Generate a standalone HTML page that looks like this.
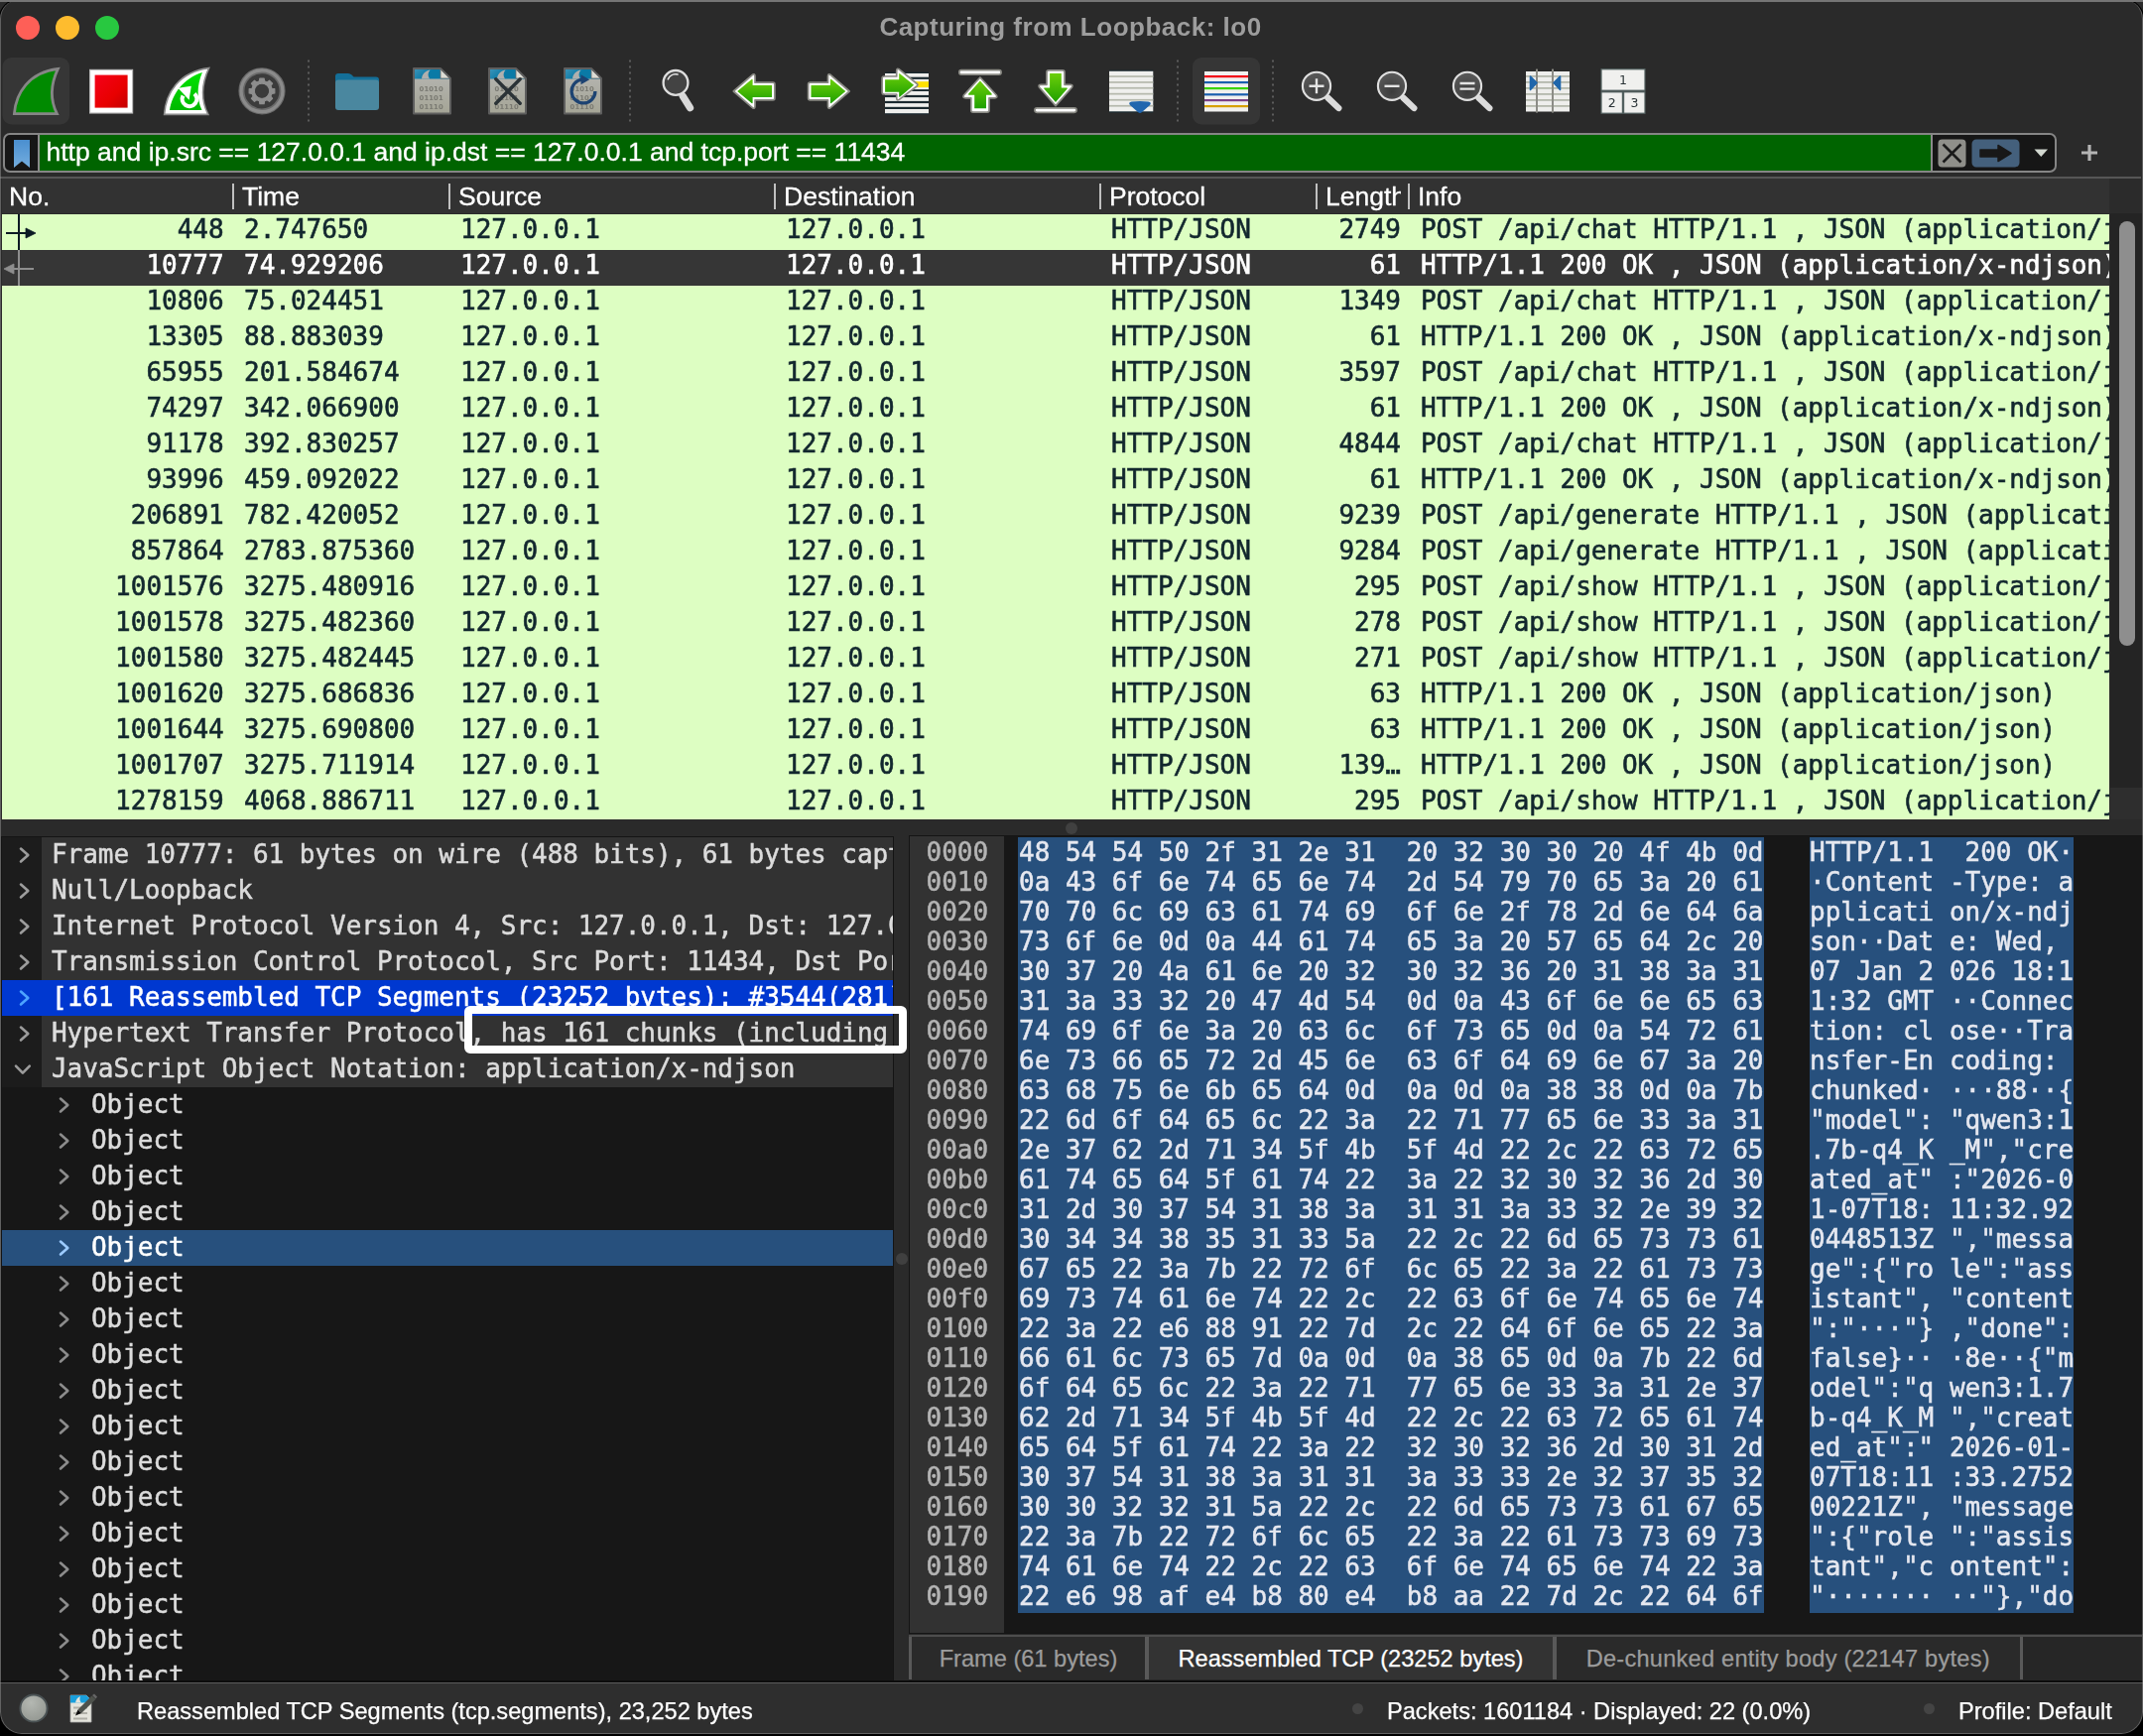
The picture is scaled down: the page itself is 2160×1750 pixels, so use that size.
<!DOCTYPE html>
<html lang="en"><head><meta charset="utf-8"><title>Capturing from Loopback: lo0</title>
<style>
html,body{margin:0;padding:0;background:#000;}
body{width:2160px;height:1750px;overflow:hidden;position:relative;font-family:"Liberation Sans",sans-serif;}
#win{will-change:opacity;position:absolute;left:0;top:0;width:2159.5px;height:1748px;background:#2a2a2a;border-radius:0 0 22px 22px;overflow:hidden;}
#win>*{position:absolute;}
/* title bar */
#titlebar{left:0;top:0;width:2158px;height:56px;}
.tl{position:absolute;top:16px;width:24px;height:24px;border-radius:50%;}
#title{position:absolute;left:0;top:0;width:2158px;text-align:center;line-height:54px;font-weight:bold;font-size:26px;color:#9d9d9d;letter-spacing:0.5px;}
/* toolbar */
#toolbar{left:0;top:56px;width:2158px;height:72px;}
#toolbar svg{position:absolute;left:0;top:0;}
/* filter */
#filter{left:3px;top:134px;width:2070px;height:40.3px;border:2px solid #858585;border-radius:7px;box-sizing:border-box;background:#161616;overflow:hidden;}
#filter>*{position:absolute;}
#fgreen{left:32.5px;top:0;width:1910.5px;height:36.3px;background:#006400;border-left:2px solid #8a8a8a;border-right:2px solid #8a8a8a;box-sizing:border-box;}
#ftext{left:41.5px;top:-1px;line-height:37px;font-size:26.5px;-webkit-text-stroke:0.3px;color:#fff;white-space:nowrap;}
#fplus{left:2097px;top:145px;width:18px;height:18px;}
#fline{left:0;top:178.4px;width:2158px;height:1.8px;background:#565656;}
/* packet list */
#plist{left:2px;top:180px;width:2157px;height:646px;background:#2b2b2b;overflow:hidden;}
#plist>*{position:absolute;}
#phead{left:-1px;top:0;width:2125px;height:35px;background:#323232;color:#fff;font-size:26px;-webkit-text-stroke:0.3px;}
.hc{position:absolute;white-space:nowrap;top:0;height:35px;line-height:36px;font-size:26.5px;}
.hs{position:absolute;top:5px;width:1.6px;height:25.5px;background:#c0c0c0;}
.c-len{width:76px;overflow:hidden;}
.prow{left:0;width:2124px;height:36px;background:#ddfec2;color:#12272e;font-family:"DejaVu Sans Mono","Liberation Mono",monospace;font-size:26px;line-height:32px;white-space:nowrap;overflow:hidden;margin-top:-180px;-webkit-text-stroke:0.6px;}
.prow.sel{background:#363636;color:#fff;}
.pc{position:absolute;top:-0.6px;}
.p-no{left:0;width:223.7px;text-align:right;}
.p-time{left:244px;}
.p-src{left:462px;}
.p-dst{left:790px;}
.p-proto{left:1118px;}
.p-len{left:1302px;width:108px;text-align:right;}
.p-info{left:1430px;letter-spacing:-0.04px;}
/* tree */
#tree{left:2px;top:844px;width:898px;height:851px;background:#171717;overflow:hidden;box-shadow:0 0 0 1px #141414;font-family:"DejaVu Sans Mono","Liberation Mono",monospace;font-size:26px;color:#dcdcdc;}
.trow{position:absolute;left:0;width:898px;height:36px;line-height:33px;white-space:nowrap;overflow:hidden;}
.trow.top{background:linear-gradient(90deg,#1c1c1c 0,#1c1c1c 40px,#323232 40px);}
.trow.tsel{background:#0038d0;color:#fff;}
.trow.csel{background:#27507d;color:#fff;}
.tt{position:absolute;left:50px;top:1px;-webkit-text-stroke:0.5px;letter-spacing:-0.04px;}
.child .tt{left:90px;}
.chev{position:absolute;left:14px;top:8px;width:20px;height:20px;fill:none;stroke:#9c9c9c;stroke-width:2.6;stroke-linecap:round;stroke-linejoin:round;overflow:visible;}
.child .chev{left:54.3px;stroke:#8c8c8c;}
.csel .chev{stroke:#9ccbff;}
.tsel .chev{stroke:#4da3ff;}
#annot{left:468px;top:1014px;width:429.6px;height:32.4px;border:8px solid #fff;border-radius:6px;box-sizing:content-box;}
/* hex */
#hex{left:917px;top:843px;width:1241.5px;height:803px;background:#171717;overflow:hidden;box-shadow:0 0 0 1px #141414;font-family:"DejaVu Sans Mono","Liberation Mono",monospace;font-size:26px;color:#e6e8f0;}
#hex>*{position:absolute;}
#hexoffbg{left:0;top:0;width:95px;height:803px;background:#323232;}
#hexsel1{left:109px;top:0.8px;width:752px;height:782px;background:#27507d;}
#hexsel2{left:907px;top:0.8px;width:266px;height:782px;background:#27507d;}
.hrow{left:0;width:1242px;height:30px;line-height:30px;white-space:pre;margin-top:1.2px;-webkit-text-stroke:0.5px;}
.hrow span{position:absolute;top:0;}
.ho{left:16.5px;color:#b4b4b4;}
.hb{left:110px;letter-spacing:-0.02px;}
.ha{left:907px;}
/* tabs */
#tabs{-webkit-text-stroke:0.25px;left:916px;top:1647.5px;width:1242.5px;height:46.2px;font-size:23.6px;color:#9c9c9c;border-top:2.5px solid #4d4d4d;box-sizing:border-box;background:#262626;}
.tab{position:absolute;top:0;height:43.7px;line-height:45.5px;text-align:center;background:#2a2a2a;box-sizing:border-box;white-space:nowrap;}
.tab.act{background:#333;color:#fff;}
.tsep{position:absolute;top:0;height:43.7px;background:#595959;}
#tabline{left:0;top:1693.7px;width:2159.5px;height:2.5px;background:#0c0c0c;}
/* status */
#status{-webkit-text-stroke:0.25px;left:0;top:1696px;width:2159.5px;height:52px;background:#2e2e2e;border-top:1.4px solid #5c5c5c;box-sizing:border-box;color:#fff;font-size:23.6px;}
#status>*{position:absolute;}
.grip{width:12px;height:12px;border-radius:50%;background:#404040;}
#frame{left:0;top:0;width:2159.5px;height:1748px;box-sizing:border-box;border:1.6px solid rgba(150,150,150,0.5);border-top:0;border-radius:19px 19px 22px 22px;pointer-events:none;box-shadow:0 0 0 1.3px #000;}
#topline{left:0;top:0;width:2160px;height:2px;background:#757575;}
</style></head>
<body>
<div id="win">
<div id="titlebar"><span class="tl" style="left:16px;background:#fe5f57"></span><span class="tl" style="left:56px;background:#febc2e"></span><span class="tl" style="left:96px;background:#28c840"></span><div id="title">Capturing from Loopback: lo0</div></div>
<div id="toolbar"><svg width="2158" height="72" viewBox="0 56 2158 72">
<defs>
<linearGradient id="gA" x1="0" y1="0" x2="0" y2="1"><stop offset="0" stop-color="#6ccf0a"/><stop offset="1" stop-color="#1fa000"/></linearGradient>
<linearGradient id="gR" x1="0" y1="0" x2="1" y2="1"><stop offset="0" stop-color="#f5001a"/><stop offset="0.6" stop-color="#e80000"/><stop offset="1" stop-color="#c40000"/></linearGradient>
<linearGradient id="gF" x1="0" y1="0" x2="0" y2="1"><stop offset="0" stop-color="#00e400"/><stop offset="1" stop-color="#00b800"/></linearGradient>
<radialGradient id="gL" cx="0.5" cy="0.700" r="0.650"><stop offset="0" stop-color="#3c3c3c"/><stop offset="1" stop-color="#595959"/></radialGradient>
<linearGradient id="gB" x1="0" y1="0" x2="1" y2="0.3"><stop offset="0" stop-color="#3a93b8"/><stop offset="0.500" stop-color="#0a7aa6"/><stop offset="1" stop-color="#0a7aa6"/></linearGradient>
<g id="dots" fill="#5c5c5c" transform="translate(0 -0.500)"><rect y="61" width="2" height="2"/><rect y="67" width="2" height="2"/><rect y="73" width="2" height="2"/><rect y="79" width="2" height="2"/><rect y="85" width="2" height="2"/><rect y="91" width="2" height="2"/><rect y="97" width="2" height="2"/><rect y="103" width="2" height="2"/><rect y="109" width="2" height="2"/><rect y="115" width="2" height="2"/><rect y="121" width="2" height="2"/></g>
<linearGradient id="gFb" x1="0" y1="0" x2="0" y2="1"><stop offset="0" stop-color="#b6b6b3"/><stop offset="1" stop-color="#a5a596"/></linearGradient>
<g id="file"><path d="M1 1 H28 L38 11 V46.600 H1 Z" fill="url(#gFb)" stroke="#5e5e5e" stroke-width="2" stroke-linejoin="round"/><path d="M2 2 H27.600 L37 11.400 H2 Z" fill="url(#gB)"/><path d="M9 11.400 C9.500 7 12 4 17.500 2.600 C15 5.500 15 8.600 17 11.400 Z" fill="#b0b0ae"/><path d="M28 2 V11 H37 Z" fill="#dcdcd4" stroke="#6a6a6a" stroke-width="0.800"/></g>
<g id="bits" font-family="'DejaVu Sans','Liberation Sans',sans-serif" font-weight="bold" font-size="6.800" fill="#7a7a72" letter-spacing="0.100"><text x="6.600" y="23.800">01010</text><text x="6.600" y="32.700">01101</text><text x="6.600" y="41.600">01110</text></g>
<g id="lens"><path d="M11.400 11.800 L22.300 22.200" stroke="#dbdbdb" stroke-width="6.300" stroke-linecap="round"/><circle cx="0" cy="0" r="14.100" fill="url(#gL)" stroke="#e0e0e0" stroke-width="2.100"/></g>
<linearGradient id="gA2" x1="0" y1="1" x2="0" y2="0"><stop offset="0" stop-color="#6ccf0a"/><stop offset="1" stop-color="#1fa000"/></linearGradient>
</defs>
<!-- active bg -->
<rect x="2.5" y="58" width="67.5" height="67.5" rx="9" fill="#363636"/>
<rect x="1202" y="58" width="68" height="67.5" rx="9" fill="#363636"/>
<!-- separators -->
<use href="#dots" x="310"/><use href="#dots" x="634"/><use href="#dots" x="1186"/><use href="#dots" x="1282"/>
<!-- start capture fin -->
<path d="M14.400 114.600 C16 94 29 73 58.400 69.400 C51.500 84 49.500 99 57.400 114.600 Z" fill="#008a00" stroke="#868686" stroke-width="2.800" stroke-linejoin="miter"/>
<!-- stop -->
<rect x="90.600" y="70.400" width="43" height="43.600" fill="#fff" stroke="#b9b9b9" stroke-width="1.200"/>
<rect x="95.600" y="75.600" width="33" height="33" fill="url(#gR)"/>
<!-- restart fin -->
<path d="M165.600 115.400 C167 94 180 72.500 210.600 68.600 C203.500 84 201.500 99 209.800 115.400 Z" fill="#fff" stroke="#8c8c8c" stroke-width="1.600" stroke-linejoin="miter"/>
<path d="M171 111 C173.500 95 184 79.500 203.900 73 C198.500 86 198 99 203.500 111 Z" fill="url(#gF)"/>
<path d="M196 94.500 A7.300 7.300 0 1 1 184.500 96.500" fill="none" stroke="#fff" stroke-width="4.200"/>
<path d="M179.400 88.700 L192.800 86.800 L190.600 100.800 Z" fill="#fff"/>
<!-- options gear -->
<circle cx="264" cy="91.800" r="20.600" fill="#3b3b3b" stroke="#6a6a6a" stroke-width="6"/>
<circle cx="264" cy="91.800" r="20.900" fill="none" stroke="#8b8b8b" stroke-width="3.200"/>
<path d="M261.42 81.83 L261.85 78.98 L266.15 78.98 L266.58 81.83 L269.23 82.93 L271.55 81.22 L274.58 84.25 L272.87 86.57 L273.97 89.22 L276.82 89.65 L276.82 93.95 L273.97 94.38 L272.87 97.03 L274.58 99.35 L271.55 102.38 L269.23 100.67 L266.58 101.77 L266.15 104.62 L261.85 104.62 L261.42 101.77 L258.77 100.67 L256.45 102.38 L253.42 99.35 L255.13 97.03 L254.03 94.38 L251.18 93.95 L251.18 89.65 L254.03 89.22 L255.13 86.57 L253.42 84.25 L256.45 81.22 L258.77 82.93 Z M271.40 91.80 A7.4 7.4 0 1 0 256.60 91.80 A7.4 7.4 0 1 0 271.40 91.80 Z" fill="#8e8e8e" stroke="#8e8e8e" stroke-width="1.200" stroke-linejoin="round" fill-rule="evenodd"/>
<circle cx="264" cy="91.800" r="7" fill="#3b3b3b"/>
<!-- folder -->
<path d="M338 77 Q338 74 341 74 H351 Q353 74 354.500 75.500 L356.500 77.500 H379 Q382 77.500 382 80.500 V84 H338 Z" fill="#146f98"/>
<rect x="338" y="80.500" width="44" height="30.500" rx="3" fill="#4a879f"/>
<!-- files -->
<use href="#file" x="416" y="68"/><use href="#bits" x="416" y="68"/>
<use href="#file" x="492" y="68"/><use href="#bits" x="492" y="68"/>
<path d="M499.800 79.800 L524.200 104.200 M524.200 79.800 L499.800 104.200" stroke="#2b3337" stroke-width="3.400" stroke-linecap="round"/>
<use href="#file" x="568" y="68"/><use href="#bits" x="568" y="68"/>
<path d="M587 80.200 A11.900 11.900 0 1 0 599.900 92" fill="none" stroke="#1d4372" stroke-width="3.300"/>
<path d="M585.500 75.300 L594.200 80.200 L585.500 85.200 Z" fill="#1d4372"/>
<!-- find -->
<path d="M688.200 96.800 L695.500 108.600" stroke="#d9d9d9" stroke-width="7.300" stroke-linecap="round"/>
<circle cx="681" cy="83.400" r="12.400" fill="#434343" stroke="#dedede" stroke-width="2.300"/>
<path d="M673.300 79.800 A8.600 8.600 0 0 1 683 75" fill="none" stroke="#e6e6e6" stroke-width="1.600" stroke-linecap="round"/>
<!-- back arrow -->
<g id="arrL"><path d="M739.300 92 L758.500 75.300 Q760.900 73.800 761 77 V83.200 H779 Q780.900 83.200 780.900 85 V99 Q780.900 100.800 779 100.800 H761 V107 Q760.900 110.200 758.500 108.700 Z" fill="#fff" stroke="#8a8a84" stroke-width="1.700" stroke-linejoin="round"/>
<path d="M743.200 92 L757.600 80 Q758.600 79.500 758.600 80.600 V86.100 H778 V97.900 H758.600 V103.400 Q758.600 104.500 757.600 104 Z" fill="url(#gA)"/></g>
<!-- fwd arrow -->
<use href="#arrL" transform="translate(1595.500 0) scale(-1 1)"/>
<!-- goto -->
<rect x="892" y="72.600" width="44" height="42.800" fill="#1b2a30"/>
<g fill="#efefed"><rect x="892" y="74" width="44" height="3.700"/><rect x="892" y="79.900" width="44" height="10.200"/><rect x="892" y="92" width="44" height="3.900"/><rect x="892" y="98.100" width="44" height="3.800"/><rect x="892" y="104.100" width="44" height="3.700"/><rect x="892" y="110" width="44" height="4.200"/></g>
<rect x="918" y="82.200" width="18" height="5.900" fill="#ffe100"/>
<path d="M889.100 79 Q889.100 77 891 77 H903.700 V71.500 Q903.800 68.300 906.300 69.800 L924.300 84.500 Q925.500 85.600 924.300 86.700 L906.300 100.400 Q903.800 102 903.700 98.700 V95 H891 Q889.100 95 889.100 93 Z" fill="#fff" stroke="#8a8a84" stroke-width="1.700" stroke-linejoin="round"/>
<path d="M892.100 80.200 H906.200 V74.800 Q906.200 73.600 907.200 74.400 L921.100 85.700 L907.200 97.600 Q906.200 98.300 906.200 97.200 V92.700 H892.100 Z" fill="url(#gA)"/>
<!-- first -->
<rect x="966.800" y="70.700" width="42.300" height="4.400" rx="2.200" fill="#fff" stroke="#8a8a84" stroke-width="1.700"/>
<path d="M987.900 78 L1004.400 96 Q1005.900 98.800 1002.500 98.800 H997 V111.200 Q997 113.100 995 113.100 H980.800 Q978.800 113.100 978.800 111.200 V98.800 H973.300 Q969.900 98.800 971.400 96 Z" fill="#fff" stroke="#8a8a84" stroke-width="1.700" stroke-linejoin="round"/>
<path d="M987.900 81.600 L999.600 94.600 Q1000.200 95.800 999 95.800 H994 V109.300 H982.200 V95.800 H976.800 Q975.600 95.800 976.200 94.600 Z" fill="url(#gA)"/>
<!-- last -->
<rect x="1042.900" y="108.900" width="42.200" height="4.400" rx="2.200" fill="#fff" stroke="#8a8a84" stroke-width="1.700"/>
<path d="M1064 106.600 L1080.500 88 Q1082 85.300 1078.600 85.300 H1073 V72.800 Q1073 70.900 1071 70.900 H1057 Q1055 70.900 1055 72.800 V85.300 H1049.400 Q1046 85.300 1047.500 88 Z" fill="#fff" stroke="#8a8a84" stroke-width="1.700" stroke-linejoin="round"/>
<path d="M1064 103.100 L1075.700 89.600 Q1076.300 88.400 1075.100 88.400 H1069.800 V74 H1058.100 V88.400 H1052.900 Q1051.700 88.400 1052.300 89.600 Z" fill="url(#gA)"/>
<!-- autoscroll -->
<rect x="1118" y="70.600" width="44.300" height="43" fill="#1b2a30"/>
<rect x="1118" y="71.800" width="44.300" height="40.500" fill="#efefed"/>
<g fill="#b5b8ac"><rect x="1118" y="76.200" width="44.300" height="1.700"/><rect x="1118" y="82.100" width="44.300" height="1.700"/><rect x="1118" y="87.900" width="44.300" height="1.700"/><rect x="1118" y="93.800" width="44.300" height="1.700"/><rect x="1118" y="99.900" width="44.300" height="1.700"/><rect x="1118" y="105.900" width="44.300" height="1.700"/></g>
<path d="M1140.500 102.600 Q1149 101.600 1157.500 102.600 Q1161.200 103.300 1159 106 L1151 113 Q1149 114.800 1147 113 L1139 106 Q1136.800 103.300 1140.500 102.600 Z" fill="#2166ae"/>
<!-- colorize -->
<rect x="1214" y="72" width="44" height="40.500" fill="#f0f0ee"/>
<g><rect x="1214" y="76" width="44" height="2.200" fill="#f10014"/><rect x="1214" y="82" width="44" height="2.200" fill="#1a5fae"/><rect x="1214" y="88" width="44" height="2.200" fill="#38d400"/><rect x="1214" y="94.200" width="44" height="2.200" fill="#1a5fae"/><rect x="1214" y="100" width="44" height="2.200" fill="#7a3f86"/><rect x="1214" y="106" width="44" height="2.200" fill="#d6a000"/></g>
<!-- zoom in / out / 1:1 -->
<use href="#lens" x="1327" y="86.800"/><path d="M1319.500 86.800 H1334.500 M1327 79.300 V94.300" stroke="#e4e4e4" stroke-width="2.400"/>
<use href="#lens" x="1403" y="86.800"/><path d="M1395.500 86.800 H1410.500" stroke="#e4e4e4" stroke-width="2.400"/>
<use href="#lens" x="1479" y="86.800"/><path d="M1471.500 84 H1486.500 M1471.500 89.600 H1486.500" stroke="#e4e4e4" stroke-width="2.400"/>
<!-- resize columns -->
<rect x="1538" y="72" width="44" height="40.500" fill="#eeeeec"/>
<g fill="#b4b8ac"><rect x="1538" y="76" width="44" height="1.800"/><rect x="1538" y="82" width="44" height="1.800"/><rect x="1538" y="88" width="44" height="1.800"/><rect x="1538" y="94" width="44" height="1.800"/><rect x="1538" y="100" width="44" height="1.800"/><rect x="1538" y="106" width="44" height="1.800"/></g>
<rect x="1548" y="69.600" width="2" height="44" fill="#8c8c86"/><rect x="1564" y="69.600" width="2" height="44" fill="#8c8c86"/>
<path d="M1542.500 77 L1549 83.500 L1542.500 90.500 Z M1572.500 77 L1566 83.500 L1572.500 90.500 Z" fill="#1f66ab" stroke="#1f66ab" stroke-width="1.600" stroke-linejoin="round"/>
<!-- layout -->
<rect x="1614" y="69.800" width="44" height="21.400" fill="#f0f0ee" stroke="#52605f" stroke-width="1.200"/>
<rect x="1614" y="92.800" width="21.400" height="21.400" fill="#f0f0ee" stroke="#52605f" stroke-width="1.200"/>
<rect x="1636.600" y="92.800" width="21.400" height="21.400" fill="#f0f0ee" stroke="#52605f" stroke-width="1.200"/>
<g font-family="'DejaVu Sans','Liberation Sans',sans-serif" font-size="12.500" fill="#2a3336" text-anchor="middle"><text x="1636" y="85.200">1</text><text x="1624.800" y="108">2</text><text x="1647.400" y="108">3</text></g>
</svg></div>
<div id="filter"><svg style="left:7.5px;top:3.5px" width="18" height="30" viewBox="0 0 18 30"><defs><linearGradient id="gBk" x1="0" y1="0" x2="0" y2="1"><stop offset="0" stop-color="#4a8fd0"/><stop offset="1" stop-color="#74aedf"/></linearGradient></defs><path d="M1 1 H17 V29 L9 22.500 L1 29 Z" fill="url(#gBk)"/></svg><div id="fgreen"></div><div id="ftext">http and ip.src == 127.0.0.1 and ip.dst == 127.0.0.1 and tcp.port == 11434</div>
<svg style="left:1948px;top:4px" width="116" height="30" viewBox="0 0 116 30"><rect x="0.500" y="0.500" width="28" height="28" rx="4" fill="#8f8f8a"/><path d="M5.500 5.500 L23.500 23.500 M23.500 5.500 L5.500 23.500" stroke="#1a1a1a" stroke-width="2.600"/><rect x="34.500" y="0.500" width="48" height="28" rx="4.500" fill="#44607c"/><path d="M43 11 H61 V6.500 L74 14.500 L61 22.500 V18 H43 Z" fill="#181818" stroke="#181818" stroke-width="1.500" stroke-linejoin="round"/><path d="M97.500 10.500 H111 L104.250 18 Z" fill="#d2d8d0"/></svg></div>
<svg id="fplus" viewBox="0 0 18 18"><path d="M9 1 V17 M1 9 H17" stroke="#b4b4b4" stroke-width="3.200"/></svg>
<div id="fline"></div>
<div id="plist">
<div id="phead"><span class="hc c-no" style="left:8px">No.</span><i class="hs" style="left:233px"></i><span class="hc c-time" style="left:243px">Time</span><i class="hs" style="left:451px"></i><span class="hc c-src" style="left:461px">Source</span><i class="hs" style="left:779px"></i><span class="hc c-dst" style="left:789px">Destination</span><i class="hs" style="left:1107px"></i><span class="hc c-proto" style="left:1117px">Protocol</span><i class="hs" style="left:1325px"></i><span class="hc c-len" style="left:1335px">Length</span><i class="hs" style="left:1418px"></i><span class="hc c-info" style="left:1428px">Info</span></div>
<div class="prow" style="top:216px"><span class="pc p-no">448</span><span class="pc p-time">2.747650</span><span class="pc p-src">127.0.0.1</span><span class="pc p-dst">127.0.0.1</span><span class="pc p-proto">HTTP/JSON</span><span class="pc p-len">2749</span><span class="pc p-info">POST /api/chat HTTP/1.1 , JSON (application/json)</span></div>
<div class="prow sel" style="top:252px"><span class="pc p-no">10777</span><span class="pc p-time">74.929206</span><span class="pc p-src">127.0.0.1</span><span class="pc p-dst">127.0.0.1</span><span class="pc p-proto">HTTP/JSON</span><span class="pc p-len">61</span><span class="pc p-info">HTTP/1.1 200 OK , JSON (application/x-ndjson)</span></div>
<div class="prow" style="top:288px"><span class="pc p-no">10806</span><span class="pc p-time">75.024451</span><span class="pc p-src">127.0.0.1</span><span class="pc p-dst">127.0.0.1</span><span class="pc p-proto">HTTP/JSON</span><span class="pc p-len">1349</span><span class="pc p-info">POST /api/chat HTTP/1.1 , JSON (application/json)</span></div>
<div class="prow" style="top:324px"><span class="pc p-no">13305</span><span class="pc p-time">88.883039</span><span class="pc p-src">127.0.0.1</span><span class="pc p-dst">127.0.0.1</span><span class="pc p-proto">HTTP/JSON</span><span class="pc p-len">61</span><span class="pc p-info">HTTP/1.1 200 OK , JSON (application/x-ndjson)</span></div>
<div class="prow" style="top:360px"><span class="pc p-no">65955</span><span class="pc p-time">201.584674</span><span class="pc p-src">127.0.0.1</span><span class="pc p-dst">127.0.0.1</span><span class="pc p-proto">HTTP/JSON</span><span class="pc p-len">3597</span><span class="pc p-info">POST /api/chat HTTP/1.1 , JSON (application/json)</span></div>
<div class="prow" style="top:396px"><span class="pc p-no">74297</span><span class="pc p-time">342.066900</span><span class="pc p-src">127.0.0.1</span><span class="pc p-dst">127.0.0.1</span><span class="pc p-proto">HTTP/JSON</span><span class="pc p-len">61</span><span class="pc p-info">HTTP/1.1 200 OK , JSON (application/x-ndjson)</span></div>
<div class="prow" style="top:432px"><span class="pc p-no">91178</span><span class="pc p-time">392.830257</span><span class="pc p-src">127.0.0.1</span><span class="pc p-dst">127.0.0.1</span><span class="pc p-proto">HTTP/JSON</span><span class="pc p-len">4844</span><span class="pc p-info">POST /api/chat HTTP/1.1 , JSON (application/json)</span></div>
<div class="prow" style="top:468px"><span class="pc p-no">93996</span><span class="pc p-time">459.092022</span><span class="pc p-src">127.0.0.1</span><span class="pc p-dst">127.0.0.1</span><span class="pc p-proto">HTTP/JSON</span><span class="pc p-len">61</span><span class="pc p-info">HTTP/1.1 200 OK , JSON (application/x-ndjson)</span></div>
<div class="prow" style="top:504px"><span class="pc p-no">206891</span><span class="pc p-time">782.420052</span><span class="pc p-src">127.0.0.1</span><span class="pc p-dst">127.0.0.1</span><span class="pc p-proto">HTTP/JSON</span><span class="pc p-len">9239</span><span class="pc p-info">POST /api/generate HTTP/1.1 , JSON (application/json)</span></div>
<div class="prow" style="top:540px"><span class="pc p-no">857864</span><span class="pc p-time">2783.875360</span><span class="pc p-src">127.0.0.1</span><span class="pc p-dst">127.0.0.1</span><span class="pc p-proto">HTTP/JSON</span><span class="pc p-len">9284</span><span class="pc p-info">POST /api/generate HTTP/1.1 , JSON (application/json)</span></div>
<div class="prow" style="top:576px"><span class="pc p-no">1001576</span><span class="pc p-time">3275.480916</span><span class="pc p-src">127.0.0.1</span><span class="pc p-dst">127.0.0.1</span><span class="pc p-proto">HTTP/JSON</span><span class="pc p-len">295</span><span class="pc p-info">POST /api/show HTTP/1.1 , JSON (application/json)</span></div>
<div class="prow" style="top:612px"><span class="pc p-no">1001578</span><span class="pc p-time">3275.482360</span><span class="pc p-src">127.0.0.1</span><span class="pc p-dst">127.0.0.1</span><span class="pc p-proto">HTTP/JSON</span><span class="pc p-len">278</span><span class="pc p-info">POST /api/show HTTP/1.1 , JSON (application/json)</span></div>
<div class="prow" style="top:648px"><span class="pc p-no">1001580</span><span class="pc p-time">3275.482445</span><span class="pc p-src">127.0.0.1</span><span class="pc p-dst">127.0.0.1</span><span class="pc p-proto">HTTP/JSON</span><span class="pc p-len">271</span><span class="pc p-info">POST /api/show HTTP/1.1 , JSON (application/json)</span></div>
<div class="prow" style="top:684px"><span class="pc p-no">1001620</span><span class="pc p-time">3275.686836</span><span class="pc p-src">127.0.0.1</span><span class="pc p-dst">127.0.0.1</span><span class="pc p-proto">HTTP/JSON</span><span class="pc p-len">63</span><span class="pc p-info">HTTP/1.1 200 OK , JSON (application/json)</span></div>
<div class="prow" style="top:720px"><span class="pc p-no">1001644</span><span class="pc p-time">3275.690800</span><span class="pc p-src">127.0.0.1</span><span class="pc p-dst">127.0.0.1</span><span class="pc p-proto">HTTP/JSON</span><span class="pc p-len">63</span><span class="pc p-info">HTTP/1.1 200 OK , JSON (application/json)</span></div>
<div class="prow" style="top:756px"><span class="pc p-no">1001707</span><span class="pc p-time">3275.711914</span><span class="pc p-src">127.0.0.1</span><span class="pc p-dst">127.0.0.1</span><span class="pc p-proto">HTTP/JSON</span><span class="pc p-len">139…</span><span class="pc p-info">HTTP/1.1 200 OK , JSON (application/json)</span></div>
<div class="prow" style="top:792px"><span class="pc p-no">1278159</span><span class="pc p-time">4068.886711</span><span class="pc p-src">127.0.0.1</span><span class="pc p-dst">127.0.0.1</span><span class="pc p-proto">HTTP/JSON</span><span class="pc p-len">295</span><span class="pc p-info">POST /api/show HTTP/1.1 , JSON (application/json)</span></div>
<div id="pscroll" style="left:2124.5px;top:35px;width:33px;height:611px;background:#242424"><div style="position:absolute;left:9.5px;top:7.600px;width:16px;height:428.400px;border-radius:8px;background:#8e8e8e"></div><div style="position:absolute;left:0;top:578.500px;width:32px;height:33px;background:#2e2e2e"></div></div>
<svg id="related" style="left:0;top:36px" width="44" height="72" viewBox="0 0 44 72"><path d="M17 0 V36" stroke="#0b1a24" stroke-width="2"/><path d="M4 19 H25" stroke="#0b1a24" stroke-width="2"/><path d="M24 14 L34 19 L24 24 Z" fill="#0b1a24" stroke="#0b1a24" stroke-width="0.800" stroke-linejoin="round"/><path d="M17 36 V72" stroke="#8e8e8e" stroke-width="2"/><path d="M11 55 H32" stroke="#8e8e8e" stroke-width="2"/><path d="M12 50 L2 55 L12 60 Z" fill="#8e8e8e" stroke="#8e8e8e" stroke-width="0.800" stroke-linejoin="round"/></svg>
</div>
<div id="tree">
<div class="trow top" style="top:0px"><svg class="chev" viewBox="0 0 20 20"><path d="M5 3.600 L12.300 10 L5 16.500"/></svg><span class="tt">Frame 10777: 61 bytes on wire (488 bits), 61 bytes captured (488 bits) on interface lo0, id 0</span></div>
<div class="trow top" style="top:36px"><svg class="chev" viewBox="0 0 20 20"><path d="M5 3.600 L12.300 10 L5 16.500"/></svg><span class="tt">Null/Loopback</span></div>
<div class="trow top" style="top:72px"><svg class="chev" viewBox="0 0 20 20"><path d="M5 3.600 L12.300 10 L5 16.500"/></svg><span class="tt">Internet Protocol Version 4, Src: 127.0.0.1, Dst: 127.0.0.1</span></div>
<div class="trow top" style="top:108px"><svg class="chev" viewBox="0 0 20 20"><path d="M5 3.600 L12.300 10 L5 16.500"/></svg><span class="tt">Transmission Control Protocol, Src Port: 11434, Dst Port: 52114, Seq: 23192, Ack: 2684, Len: 5</span></div>
<div class="trow top tsel" style="top:144px"><svg class="chev" viewBox="0 0 20 20"><path d="M5 3.600 L12.300 10 L5 16.500"/></svg><span class="tt">[161 Reassembled TCP Segments (23252 bytes): #3544(281), #3546(143), #3594(149), #3644(149)]</span></div>
<div class="trow top" style="top:180px"><svg class="chev" viewBox="0 0 20 20"><path d="M5 3.600 L12.300 10 L5 16.500"/></svg><span class="tt">Hypertext Transfer Protocol, has 161 chunks (including last chunk)</span></div>
<div class="trow top" style="top:216px"><svg class="chev dn" viewBox="0 0 20 20"><path d="M0 6.600 L6.900 13.600 L13.800 6.600"/></svg><span class="tt">JavaScript Object Notation: application/x-ndjson</span></div>
<div class="trow child" style="top:252px"><svg class="chev" viewBox="0 0 20 20"><path d="M5 3.600 L12.300 10 L5 16.500"/></svg><span class="tt">Object</span></div>
<div class="trow child" style="top:288px"><svg class="chev" viewBox="0 0 20 20"><path d="M5 3.600 L12.300 10 L5 16.500"/></svg><span class="tt">Object</span></div>
<div class="trow child" style="top:324px"><svg class="chev" viewBox="0 0 20 20"><path d="M5 3.600 L12.300 10 L5 16.500"/></svg><span class="tt">Object</span></div>
<div class="trow child" style="top:360px"><svg class="chev" viewBox="0 0 20 20"><path d="M5 3.600 L12.300 10 L5 16.500"/></svg><span class="tt">Object</span></div>
<div class="trow child csel" style="top:396px"><svg class="chev" viewBox="0 0 20 20"><path d="M5 3.600 L12.300 10 L5 16.500"/></svg><span class="tt">Object</span></div>
<div class="trow child" style="top:432px"><svg class="chev" viewBox="0 0 20 20"><path d="M5 3.600 L12.300 10 L5 16.500"/></svg><span class="tt">Object</span></div>
<div class="trow child" style="top:468px"><svg class="chev" viewBox="0 0 20 20"><path d="M5 3.600 L12.300 10 L5 16.500"/></svg><span class="tt">Object</span></div>
<div class="trow child" style="top:504px"><svg class="chev" viewBox="0 0 20 20"><path d="M5 3.600 L12.300 10 L5 16.500"/></svg><span class="tt">Object</span></div>
<div class="trow child" style="top:540px"><svg class="chev" viewBox="0 0 20 20"><path d="M5 3.600 L12.300 10 L5 16.500"/></svg><span class="tt">Object</span></div>
<div class="trow child" style="top:576px"><svg class="chev" viewBox="0 0 20 20"><path d="M5 3.600 L12.300 10 L5 16.500"/></svg><span class="tt">Object</span></div>
<div class="trow child" style="top:612px"><svg class="chev" viewBox="0 0 20 20"><path d="M5 3.600 L12.300 10 L5 16.500"/></svg><span class="tt">Object</span></div>
<div class="trow child" style="top:648px"><svg class="chev" viewBox="0 0 20 20"><path d="M5 3.600 L12.300 10 L5 16.500"/></svg><span class="tt">Object</span></div>
<div class="trow child" style="top:684px"><svg class="chev" viewBox="0 0 20 20"><path d="M5 3.600 L12.300 10 L5 16.500"/></svg><span class="tt">Object</span></div>
<div class="trow child" style="top:720px"><svg class="chev" viewBox="0 0 20 20"><path d="M5 3.600 L12.300 10 L5 16.500"/></svg><span class="tt">Object</span></div>
<div class="trow child" style="top:756px"><svg class="chev" viewBox="0 0 20 20"><path d="M5 3.600 L12.300 10 L5 16.500"/></svg><span class="tt">Object</span></div>
<div class="trow child" style="top:792px"><svg class="chev" viewBox="0 0 20 20"><path d="M5 3.600 L12.300 10 L5 16.500"/></svg><span class="tt">Object</span></div>
<div class="trow child" style="top:828px"><svg class="chev" viewBox="0 0 20 20"><path d="M5 3.600 L12.300 10 L5 16.500"/></svg><span class="tt">Object</span></div>
</div>
<div id="annot"></div>
<i class="grip" style="left:1073.5px;top:829.1px"></i><i class="grip" style="left:902.9px;top:1263.1px"></i>
<div id="hex">
<div id="hexoffbg"></div><div id="hexsel1"></div><div id="hexsel2"></div>
<div class="hrow" style="top:0px"><span class="ho">0000</span><span class="hb">48 54 54 50 2f 31 2e 31  20 32 30 30 20 4f 4b 0d</span><span class="ha">HTTP/1.1  200 OK·</span></div>
<div class="hrow" style="top:30px"><span class="ho">0010</span><span class="hb">0a 43 6f 6e 74 65 6e 74  2d 54 79 70 65 3a 20 61</span><span class="ha">·Content -Type: a</span></div>
<div class="hrow" style="top:60px"><span class="ho">0020</span><span class="hb">70 70 6c 69 63 61 74 69  6f 6e 2f 78 2d 6e 64 6a</span><span class="ha">pplicati on/x-ndj</span></div>
<div class="hrow" style="top:90px"><span class="ho">0030</span><span class="hb">73 6f 6e 0d 0a 44 61 74  65 3a 20 57 65 64 2c 20</span><span class="ha">son··Dat e: Wed, </span></div>
<div class="hrow" style="top:120px"><span class="ho">0040</span><span class="hb">30 37 20 4a 61 6e 20 32  30 32 36 20 31 38 3a 31</span><span class="ha">07 Jan 2 026 18:1</span></div>
<div class="hrow" style="top:150px"><span class="ho">0050</span><span class="hb">31 3a 33 32 20 47 4d 54  0d 0a 43 6f 6e 6e 65 63</span><span class="ha">1:32 GMT ··Connec</span></div>
<div class="hrow" style="top:180px"><span class="ho">0060</span><span class="hb">74 69 6f 6e 3a 20 63 6c  6f 73 65 0d 0a 54 72 61</span><span class="ha">tion: cl ose··Tra</span></div>
<div class="hrow" style="top:210px"><span class="ho">0070</span><span class="hb">6e 73 66 65 72 2d 45 6e  63 6f 64 69 6e 67 3a 20</span><span class="ha">nsfer-En coding: </span></div>
<div class="hrow" style="top:240px"><span class="ho">0080</span><span class="hb">63 68 75 6e 6b 65 64 0d  0a 0d 0a 38 38 0d 0a 7b</span><span class="ha">chunked· ···88··{</span></div>
<div class="hrow" style="top:270px"><span class="ho">0090</span><span class="hb">22 6d 6f 64 65 6c 22 3a  22 71 77 65 6e 33 3a 31</span><span class="ha">"model": "qwen3:1</span></div>
<div class="hrow" style="top:300px"><span class="ho">00a0</span><span class="hb">2e 37 62 2d 71 34 5f 4b  5f 4d 22 2c 22 63 72 65</span><span class="ha">.7b-q4_K _M","cre</span></div>
<div class="hrow" style="top:330px"><span class="ho">00b0</span><span class="hb">61 74 65 64 5f 61 74 22  3a 22 32 30 32 36 2d 30</span><span class="ha">ated_at" :"2026-0</span></div>
<div class="hrow" style="top:360px"><span class="ho">00c0</span><span class="hb">31 2d 30 37 54 31 38 3a  31 31 3a 33 32 2e 39 32</span><span class="ha">1-07T18: 11:32.92</span></div>
<div class="hrow" style="top:390px"><span class="ho">00d0</span><span class="hb">30 34 34 38 35 31 33 5a  22 2c 22 6d 65 73 73 61</span><span class="ha">0448513Z ","messa</span></div>
<div class="hrow" style="top:420px"><span class="ho">00e0</span><span class="hb">67 65 22 3a 7b 22 72 6f  6c 65 22 3a 22 61 73 73</span><span class="ha">ge":{"ro le":"ass</span></div>
<div class="hrow" style="top:450px"><span class="ho">00f0</span><span class="hb">69 73 74 61 6e 74 22 2c  22 63 6f 6e 74 65 6e 74</span><span class="ha">istant", "content</span></div>
<div class="hrow" style="top:480px"><span class="ho">0100</span><span class="hb">22 3a 22 e6 88 91 22 7d  2c 22 64 6f 6e 65 22 3a</span><span class="ha">":"···"} ,"done":</span></div>
<div class="hrow" style="top:510px"><span class="ho">0110</span><span class="hb">66 61 6c 73 65 7d 0a 0d  0a 38 65 0d 0a 7b 22 6d</span><span class="ha">false}·· ·8e··{"m</span></div>
<div class="hrow" style="top:540px"><span class="ho">0120</span><span class="hb">6f 64 65 6c 22 3a 22 71  77 65 6e 33 3a 31 2e 37</span><span class="ha">odel":"q wen3:1.7</span></div>
<div class="hrow" style="top:570px"><span class="ho">0130</span><span class="hb">62 2d 71 34 5f 4b 5f 4d  22 2c 22 63 72 65 61 74</span><span class="ha">b-q4_K_M ","creat</span></div>
<div class="hrow" style="top:600px"><span class="ho">0140</span><span class="hb">65 64 5f 61 74 22 3a 22  32 30 32 36 2d 30 31 2d</span><span class="ha">ed_at":" 2026-01-</span></div>
<div class="hrow" style="top:630px"><span class="ho">0150</span><span class="hb">30 37 54 31 38 3a 31 31  3a 33 33 2e 32 37 35 32</span><span class="ha">07T18:11 :33.2752</span></div>
<div class="hrow" style="top:660px"><span class="ho">0160</span><span class="hb">30 30 32 32 31 5a 22 2c  22 6d 65 73 73 61 67 65</span><span class="ha">00221Z", "message</span></div>
<div class="hrow" style="top:690px"><span class="ho">0170</span><span class="hb">22 3a 7b 22 72 6f 6c 65  22 3a 22 61 73 73 69 73</span><span class="ha">":{"role ":"assis</span></div>
<div class="hrow" style="top:720px"><span class="ho">0180</span><span class="hb">74 61 6e 74 22 2c 22 63  6f 6e 74 65 6e 74 22 3a</span><span class="ha">tant","c ontent":</span></div>
<div class="hrow" style="top:750px"><span class="ho">0190</span><span class="hb">22 e6 98 af e4 b8 80 e4  b8 aa 22 7d 2c 22 64 6f</span><span class="ha">"······· ··"},"do</span></div>
</div>
<div id="tabs"><i class="tsep" style="left:0;width:3px"></i><span class="tab" style="left:3px;width:235px">Frame (61 bytes)</span><i class="tsep" style="left:238px;width:4px"></i><span class="tab act" style="left:242px;width:407px">Reassembled TCP (23252 bytes)</span><i class="tsep" style="left:649px;width:3.5px"></i><span class="tab" style="left:652.5px;width:467.5px;letter-spacing:0.23px">De-chunked entity body (22147 bytes)</span><i class="tsep" style="left:1120px;width:3px"></i></div>
<div id="tabline"></div>
<div id="status"><svg style="left:18px;top:9px" width="32" height="32" viewBox="0 0 32 32"><defs><radialGradient id="gS" cx="0.400" cy="0.300" r="0.800"><stop offset="0" stop-color="#b4b8b2"/><stop offset="1" stop-color="#90948e"/></radialGradient></defs><circle cx="16" cy="16" r="13.600" fill="url(#gS)" stroke="#4a5254" stroke-width="2"/></svg>
<svg style="left:68px;top:10px" width="30" height="30" viewBox="0 0 30 30"><path d="M3 2 H19 L24 7 V29 H3 Z" fill="#e4e4dc" stroke="#aaa" stroke-width="0.800"/><path d="M3 2 H19 L24 7 V9.500 H3 Z" fill="#1a9fdc"/><path d="M8 9.500 C8.500 6 10.500 4 13 3 C12 5.500 12.300 7.500 14 9.500 Z" fill="#e4e4dc"/><g fill="#b0b0a8"><rect x="6" y="13.500" width="14" height="2"/><rect x="6" y="19" width="14" height="2"/><rect x="6" y="24.500" width="14" height="2"/></g><path d="M24.500 2.500 L28.500 6 L14 20 L10.500 16.500 Z" fill="#4e524c"/><path d="M10.500 16.500 L14 20 L8 22.500 Z" fill="#0a0a0a"/><path d="M25 2 L27 0.500 L30 3.500 L28.500 5.500 Z" fill="#666"/></svg>
<span style="left:138px;top:0;line-height:56px;white-space:nowrap" id="stxt1">Reassembled TCP Segments (tcp.segments), 23,252 bytes</span>
<span style="left:1363px;top:20px;width:11px;height:11px;border-radius:50%;background:#444"></span>
<span style="left:1398px;top:0;line-height:56px;white-space:nowrap" id="stxt2">Packets: 1601184 · Displayed: 22 (0.0%)</span>
<span style="left:1939px;top:20px;width:11px;height:11px;border-radius:50%;background:#444"></span>
<span style="left:1974px;top:0;line-height:56px;white-space:nowrap" id="stxt3">Profile: Default</span>
</div>
<div id="frame"></div><div id="topline"></div>
</div>
</body></html>
